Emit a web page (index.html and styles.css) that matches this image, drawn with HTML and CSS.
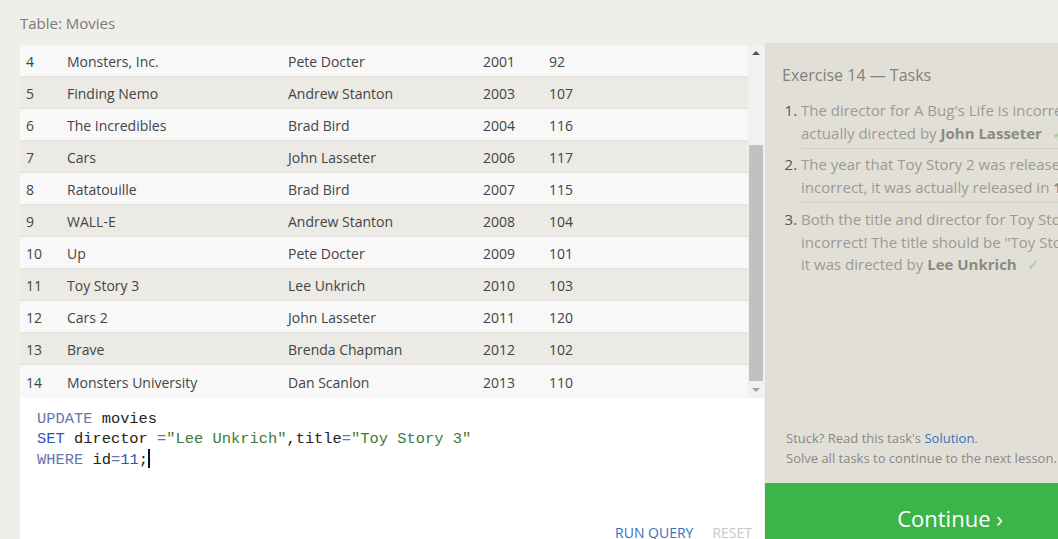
FILE: index.html
```html
<!DOCTYPE html>
<html>
<head>
<meta charset="utf-8">
<link rel="stylesheet" href="styles.css">
</head>
<body>
<div class="page">
  <div class="left">
    <div class="table-title">Table: Movies</div>
    <div class="table-box">
      <div class="rows">
        <div class="row"><span>4</span><span>Monsters, Inc.</span><span>Pete Docter</span><span>2001</span><span>92</span></div>
        <div class="row alt"><span>5</span><span>Finding Nemo</span><span>Andrew Stanton</span><span>2003</span><span>107</span></div>
        <div class="row"><span>6</span><span>The Incredibles</span><span>Brad Bird</span><span>2004</span><span>116</span></div>
        <div class="row alt"><span>7</span><span>Cars</span><span>John Lasseter</span><span>2006</span><span>117</span></div>
        <div class="row"><span>8</span><span>Ratatouille</span><span>Brad Bird</span><span>2007</span><span>115</span></div>
        <div class="row alt"><span>9</span><span>WALL-E</span><span>Andrew Stanton</span><span>2008</span><span>104</span></div>
        <div class="row"><span>10</span><span>Up</span><span>Pete Docter</span><span>2009</span><span>101</span></div>
        <div class="row alt"><span>11</span><span>Toy Story 3</span><span>Lee Unkrich</span><span>2010</span><span>103</span></div>
        <div class="row"><span>12</span><span>Cars 2</span><span>John Lasseter</span><span>2011</span><span>120</span></div>
        <div class="row alt"><span>13</span><span>Brave</span><span>Brenda Chapman</span><span>2012</span><span>102</span></div>
        <div class="row"><span>14</span><span>Monsters University</span><span>Dan Scanlon</span><span>2013</span><span>110</span></div>
      </div>
      <div class="scrollbar">
        <div class="arrow up"></div>
        <div class="track"><div class="thumb"></div></div>
        <div class="arrow down"></div>
      </div>
    </div>
    <div class="editor">
      <pre class="code"><span class="kw">UPDATE</span> movies
<span class="kw2">SET</span> director <span class="op">=</span><span class="str">"Lee Unkrich"</span>,title<span class="op">=</span><span class="str">"Toy Story 3"</span>
<span class="kw">WHERE</span> id<span class="op">=</span><span class="num">11</span>;<span class="cursor"></span></pre>
      <div class="actions">
        <span class="run">RUN QUERY</span>
        <span class="reset">RESET</span>
      </div>
    </div>
  </div>
  <div class="panel">
    <h2 class="panel-title">Exercise 14 — Tasks</h2>
    <ol class="tasks">
      <li>The director for A Bug's Life is incorrect, it was actually directed by <b>John Lasseter</b> <span class="check">✓</span></li>
      <li>The year that Toy Story 2 was released is incorrect, it was actually released in <b>1999</b> <span class="check">✓</span></li>
      <li>Both the title and director for Toy Story 8 is incorrect! The title should be "Toy Story 3" and it was directed by <b>Lee Unkrich</b> <span class="check">✓</span></li>
    </ol>
    <div class="help">
      <p>Stuck? Read this task's <a class="link">Solution</a>.</p>
      <p>Solve all tasks to continue to the next lesson.</p>
    </div>
    <div class="continue">Continue ›</div>
  </div>
</div>
</body>
</html>
```

FILE: styles.css
```css
html, body {
  margin: 0;
  padding: 0;
}
body {
  width: 1058px;
  height: 539px;
  overflow: hidden;
  background: #f0eee8;
  font-family: "Open Sans", "Liberation Sans", sans-serif;
}
.page {
  display: flex;
  align-items: flex-start;
}
.left {
  width: 744px;
  margin-left: 20px;
  flex: none;
}
.table-title {
  height: 45px;
  line-height: 46px;
  font-size: 15px;
  color: #7a7a7a;
}
.table-box {
  display: flex;
  height: 353px;
  background: #f8f8f8;
}
.rows {
  flex: 1;
}
.row {
  display: grid;
  grid-template-columns: 41px 221px 195px 66px 1fr;
  padding-left: 6px;
  padding-top: 1px;
  height: 30px;
  line-height: 32px;
  border-bottom: 1px solid #e3e2dc;
  background: #f8f8f8;
  font-size: 14px;
  color: #444;
}
.row.alt {
  background: #ebeae4;
}
.row:last-child {
  border-bottom: none;
  padding-top: 2px;
  height: 31px;
}
.scrollbar {
  width: 16px;
  display: flex;
  flex-direction: column;
  background: #f1f1f1;
}
.arrow {
  height: 17px;
  position: relative;
}
.arrow::after {
  content: "";
  position: absolute;
  left: 4px;
  width: 0;
  height: 0;
  border-left: 4px solid transparent;
  border-right: 4px solid transparent;
}
.arrow.up::after {
  top: 6px;
  border-bottom: 4px solid #505050;
}
.arrow.down::after {
  top: 7px;
  border-top: 4px solid #a3a3a3;
}
.track {
  flex: 1;
  padding-top: 83px;
  padding-left: 1px;
  padding-right: 1px;
}
.thumb {
  height: 236px;
  background: #c1c1c1;
}
.editor {
  background: #ffffff;
  height: 141px;
  display: flex;
  flex-direction: column;
  overflow: hidden;
}
.code {
  margin: 0;
  padding: 11px 17px 0;
  font-family: "Liberation Mono", "DejaVu Sans Mono", monospace;
  font-size: 15.4px;
  line-height: 20px;
  color: #222;
}
.kw { color: #6676a8; }
.kw2 { color: #2b56c2; }
.op { color: #6676a8; }
.str { color: #3b7a3b; }
.num { color: #2b56c2; }
.cursor {
  display: inline-block;
  width: 2px;
  height: 19px;
  background: #111;
  vertical-align: -4px;
}
.actions {
  display: flex;
  justify-content: flex-end;
  gap: 19px;
  padding-right: 12px;
  margin-top: 53px;
  font-size: 14px;
  line-height: 20px;
}
.run { color: #3a6fc0; }
.reset { color: #c8c8c8; }
.panel {
  margin-top: 43px;
  margin-left: 1px;
  width: 370px;
  flex: none;
  height: 510px;
  background: #e2e0d6;
  display: flex;
  flex-direction: column;
}
.panel-title {
  margin: 0;
  padding: 21px 0 0 17px;
  font-size: 16px;
  font-weight: normal;
  line-height: 22px;
  color: #808080;
}
.tasks {
  margin: 13px 0 0;
  padding: 0 0 0 36px;
  width: 332px;
  font-size: 15px;
  line-height: 22.5px;
  color: #9a9a95;
}
.tasks li {
  padding: 0 0 4px;
  margin-bottom: 5px;
  border-bottom: 1px solid #d4d2c8;
}
.tasks li:first-child {
  margin-bottom: 4px;
}
.tasks li:last-child {
  border-bottom: none;
}
.tasks li::marker {
  color: #555;
}
.tasks b {
  color: #8a8a85;
}
.check {
  color: #96cf96;
  margin-left: 6px;
}
.help {
  margin-top: auto;
  padding: 0 0 15px 21px;
  font-size: 13px;
  line-height: 20px;
  color: #888;
}
.help p {
  margin: 0;
  white-space: nowrap;
}
.link {
  color: #3a6fc0;
}
.continue {
  height: 70px;
  background: #3bb54a;
  color: #fff;
  font-size: 22px;
  line-height: 70px;
  text-align: center;
  flex: none;
}
```
